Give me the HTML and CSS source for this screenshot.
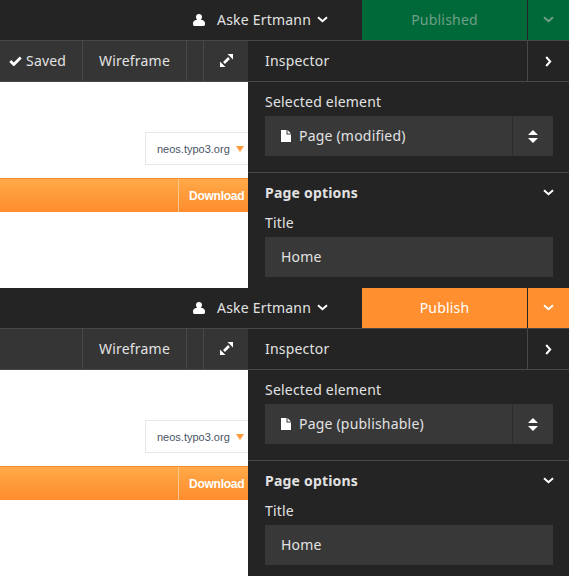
FILE: index.html
```html
<!DOCTYPE html>
<html lang="en">
<head>
    <meta charset="UTF-8">
    <meta name="viewport" content="width=device-width, initial-scale=1.0">
    <title>Neos publish states</title>
    <link rel="stylesheet" href="styles.css">
</head>
<body>
    <!-- published state -->
    <section class="panel">
        <header class="topbar">
            <div class="user">
                <svg class="user-icon" viewBox="0 0 12 12"><path d="M6 0c1.800 0 3 1.300 3 3 0 1.200-.5 2.100-1.300 2.700C10 6 12 6.800 12 9v1.600c0 .8-.6 1.400-1.400 1.400H1.400C.6 12 0 11.400 0 10.600V9c0-2.200 2-3 4.300-3.300C3.500 5.100 3 4.200 3 3c0-1.700 1.200-3 3-3z"/></svg>
                <span class="user-name">Aske Ertmann</span>
                <svg class="chevron" viewBox="0 0 11 7"><path d="M1 1.200l4.500 4 4.500-4"/></svg>
            </div>
            <div class="publish publish-done">Published</div>
            <div class="publish-more publish-done">
                <svg class="chevron" viewBox="0 0 11 7"><path d="M1 1.200l4.500 4 4.500-4"/></svg>
            </div>
        </header>
        <div class="workspace">
            <div class="content">
                <div class="toolbar">
                    <div class="tool tool-status">
                        <svg class="check" viewBox="0 0 13 10"><path d="M1.300 5l3.500 3.500 6.900-7"/></svg>
                        Saved
                    </div>
                    <div class="tool tool-mode">Wireframe</div>
                    <div class="tool tool-gap"></div>
                    <div class="tool tool-full">
                        <svg class="expand" viewBox="0 0 13 13"><path class="expand-fill" d="M7.500 0H13v5.500zM0 7.500V13h5.500z"/><path class="expand-line" d="M9 4L4 9"/></svg>
                    </div>
                </div>
                <div class="page">
                    <div class="site-select">
                        <span>neos.typo3.org</span>
                        <i class="site-arrow"></i>
                    </div>
                    <div class="site-bar">
                        <span class="site-download">Download</span>
                    </div>
                </div>
            </div>
            <aside class="inspector">
                <div class="inspector-head">
                    <span class="inspector-title">Inspector</span>
                    <div class="inspector-close">
                        <svg class="chevron-right" viewBox="0 0 7 11"><path d="M1.200 1l4 4.500-4 4.500"/></svg>
                    </div>
                </div>
                <div class="inspector-group">
                    <div class="field-label">Selected element</div>
                    <div class="select">
                        <div class="select-value">
                            <svg class="doc" viewBox="0 0 10 12"><path d="M0 0h5.500v4.500H10V12H0zM6.500 0L10 3.500H6.500z"/></svg>
                            Page (modified)
                        </div>
                        <div class="select-arrows">
                            <i class="arrow-up"></i>
                            <i class="arrow-down"></i>
                        </div>
                    </div>
                </div>
                <div class="inspector-group inspector-options">
                    <div class="options-head">
                        <span>Page options</span>
                        <svg class="chevron" viewBox="0 0 11 7"><path d="M1 1.200l4.500 4 4.500-4"/></svg>
                    </div>
                    <div class="field-label">Title</div>
                    <div class="text-field">Home</div>
                </div>
            </aside>
        </div>
    </section>

    <!-- publishable state -->
    <section class="panel">
        <header class="topbar">
            <div class="user">
                <svg class="user-icon" viewBox="0 0 12 12"><path d="M6 0c1.800 0 3 1.300 3 3 0 1.200-.5 2.100-1.300 2.700C10 6 12 6.800 12 9v1.600c0 .8-.6 1.400-1.400 1.400H1.400C.6 12 0 11.400 0 10.600V9c0-2.200 2-3 4.300-3.300C3.500 5.100 3 4.200 3 3c0-1.700 1.200-3 3-3z"/></svg>
                <span class="user-name">Aske Ertmann</span>
                <svg class="chevron" viewBox="0 0 11 7"><path d="M1 1.200l4.500 4 4.500-4"/></svg>
            </div>
            <div class="publish publish-todo">Publish</div>
            <div class="publish-more publish-todo">
                <svg class="chevron" viewBox="0 0 11 7"><path d="M1 1.200l4.500 4 4.500-4"/></svg>
            </div>
        </header>
        <div class="workspace">
            <div class="content">
                <div class="toolbar">
                    <div class="tool tool-status"></div>
                    <div class="tool tool-mode">Wireframe</div>
                    <div class="tool tool-gap"></div>
                    <div class="tool tool-full">
                        <svg class="expand" viewBox="0 0 13 13"><path class="expand-fill" d="M7.500 0H13v5.500zM0 7.500V13h5.500z"/><path class="expand-line" d="M9 4L4 9"/></svg>
                    </div>
                </div>
                <div class="page">
                    <div class="site-select">
                        <span>neos.typo3.org</span>
                        <i class="site-arrow"></i>
                    </div>
                    <div class="site-bar">
                        <span class="site-download">Download</span>
                    </div>
                </div>
            </div>
            <aside class="inspector">
                <div class="inspector-head">
                    <span class="inspector-title">Inspector</span>
                    <div class="inspector-close">
                        <svg class="chevron-right" viewBox="0 0 7 11"><path d="M1.200 1l4 4.500-4 4.500"/></svg>
                    </div>
                </div>
                <div class="inspector-group">
                    <div class="field-label">Selected element</div>
                    <div class="select">
                        <div class="select-value">
                            <svg class="doc" viewBox="0 0 10 12"><path d="M0 0h5.500v4.500H10V12H0zM6.500 0L10 3.500H6.500z"/></svg>
                            Page (publishable)
                        </div>
                        <div class="select-arrows">
                            <i class="arrow-up"></i>
                            <i class="arrow-down"></i>
                        </div>
                    </div>
                </div>
                <div class="inspector-group inspector-options">
                    <div class="options-head">
                        <span>Page options</span>
                        <svg class="chevron" viewBox="0 0 11 7"><path d="M1 1.200l4.500 4 4.500-4"/></svg>
                    </div>
                    <div class="field-label">Title</div>
                    <div class="text-field">Home</div>
                </div>
            </aside>
        </div>
    </section>
</body>
</html>
```

FILE: styles.css
```css
* {
    box-sizing: border-box;
}

html, body {
    height: 576px;
    overflow: hidden;
}

body {
    margin: 0;
    background: #242424;
    color: #e2e2e2;
    font-family: 'Noto Sans', sans-serif;
    font-size: 14px;
    letter-spacing: 0.2px;
}

.panel {
    height: 288px;
    overflow: hidden;
}

/* top bar */

.topbar {
    display: flex;
    justify-content: flex-end;
    height: 41px;
    background: #242424;
    border-bottom: 1px solid #484848;
}

.user {
    display: flex;
    align-items: center;
    margin-right: 34px;
    padding-bottom: 1px;
}

.user-icon {
    width: 12px;
    height: 12px;
    fill: #fff;
    margin-right: 12px;
}

.user-name {
    margin-right: 6px;
}

.chevron {
    width: 11px;
    height: 7px;
    fill: none;
    stroke: #fff;
    stroke-width: 2;
}

.publish {
    display: flex;
    align-items: center;
    justify-content: center;
    width: 165px;
    padding-bottom: 1px;
}

.publish-more {
    display: flex;
    align-items: center;
    justify-content: center;
    width: 42px;
    padding-bottom: 1px;
    border-left: 1px solid #242424;
}

.publish-done {
    background: #00693a;
    color: #6f9f87;
}

.publish-done .chevron {
    stroke: #6f9f87;
}

.publish-todo {
    background: #ff8f2f;
    color: #fff;
}

/* left side */

.workspace {
    display: flex;
    height: 247px;
}

.content {
    width: 248px;
    flex-shrink: 0;
    overflow: hidden;
}

.toolbar {
    display: flex;
    height: 41px;
    background: #353535;
    border-bottom: 1px solid #484848;
}

.tool {
    display: flex;
    align-items: center;
    justify-content: center;
    padding-bottom: 1px;
    border-right: 1px solid #484848;
}

.tool-status {
    width: 83px;
    padding-left: 9px;
    justify-content: flex-start;
}

.tool-mode {
    width: 104px;
}

.tool-gap {
    width: 17px;
}

.tool-full {
    flex: 1;
    border-right: 0;
}

.check {
    width: 13px;
    height: 10px;
    margin-right: 4px;
    fill: none;
    stroke: #fff;
    stroke-width: 2.800;
}

.expand {
    width: 13px;
    height: 13px;
}

.expand-fill {
    fill: #fff;
}

.expand-line {
    fill: none;
    stroke: #fff;
    stroke-width: 2.600;
}

.page {
    height: 206px;
    padding-top: 50px;
    background: #fff;
    font-family: 'Liberation Sans', sans-serif;
    letter-spacing: 0;
}

.site-select {
    display: flex;
    align-items: center;
    width: 103px;
    height: 33px;
    margin-left: auto;
    padding-left: 11px;
    border: 1px solid #e8e8e8;
    border-right: 0;
    color: #4b5566;
    font-size: 11px;
}

.site-arrow {
    width: 0;
    height: 0;
    margin-left: 6px;
    border-top: 6px solid #ff9a3a;
    border-left: 4px solid transparent;
    border-right: 4px solid transparent;
}

.site-bar {
    display: flex;
    justify-content: flex-end;
    height: 34px;
    margin-top: 13px;
    background: linear-gradient(#ffa948, #ff8d2c);
    border-top: 1px solid #f58a2c;
}

.site-download {
    display: flex;
    align-items: center;
    width: 70px;
    padding-left: 10px;
    border-left: 1px solid #ffc68f;
    color: #fff;
    font-size: 12px;
    font-weight: bold;
    letter-spacing: -0.25px;
    white-space: nowrap;
}

/* inspector */

.inspector {
    flex: 1;
    background: #242424;
}

.inspector-head {
    display: flex;
    align-items: center;
    height: 41px;
    padding-left: 17px;
    border-bottom: 1px solid #484848;
}

.inspector-title {
    flex: 1;
    padding-bottom: 1px;
}

.inspector-close {
    display: flex;
    align-items: center;
    justify-content: center;
    width: 42px;
    height: 100%;
    border-left: 1px solid #484848;
}

.chevron-right {
    width: 7px;
    height: 11px;
    fill: none;
    stroke: #fff;
    stroke-width: 2;
}

.inspector-group {
    padding: 10px 16px 16px 17px;
    border-bottom: 1px solid #484848;
}

.inspector-options {
    border-bottom: 0;
}

.field-label {
    line-height: 20px;
    margin-bottom: 4px;
}

.select {
    display: flex;
    height: 40px;
    background: #383838;
}

.select-value {
    flex: 1;
    display: flex;
    align-items: center;
    padding: 0 0 1px 16px;
    border-right: 1px solid #2c2c2c;
}

.doc {
    width: 10px;
    height: 12px;
    margin-right: 8px;
    fill: #fff;
}

.select-arrows {
    display: flex;
    flex-direction: column;
    align-items: center;
    justify-content: center;
    gap: 3px;
    width: 40px;
}

.arrow-up, .arrow-down {
    width: 0;
    height: 0;
    border-left: 5px solid transparent;
    border-right: 5px solid transparent;
}

.arrow-up {
    border-bottom: 5px solid #fff;
}

.arrow-down {
    border-top: 5px solid #fff;
}

.options-head {
    display: flex;
    align-items: center;
    justify-content: space-between;
    height: 20px;
    margin: 0 -1px 10px 0;
    padding-bottom: 2px;
    font-weight: bold;
}

.text-field {
    display: flex;
    align-items: center;
    height: 40px;
    padding: 0 0 1px 16px;
    background: #383838;
}
```
